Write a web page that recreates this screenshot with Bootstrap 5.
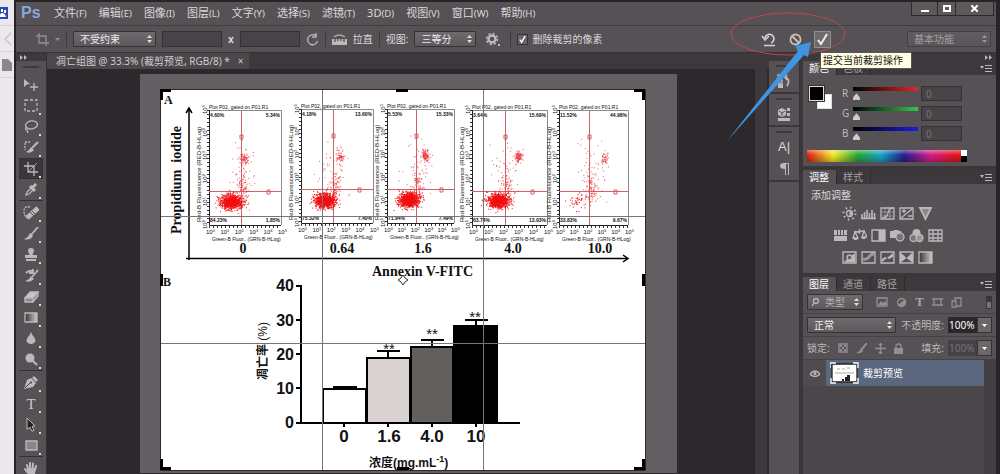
<!DOCTYPE html>
<html lang="zh-CN">
<head>
<meta charset="utf-8">
<meta name="viewport" content="width=device-width, initial-scale=1">
<title>凋亡组图 @ 33.3%</title>
<link href="https://cdn.jsdelivr.net/npm/bootstrap@5.3.0/dist/css/bootstrap.min.css" rel="stylesheet">
<style>
:root{--panel:#555155;--edge:#353135;--bar:#3c383c;--deep:#2c282c;--ink:#dcd8dc;--mute:#a5a1a5}
body{font:10px/14px "Noto Sans","Noto Sans CJK SC",sans-serif;color:var(--ink);background:#242024}
button,select,input{font:inherit;color:inherit}
button{background:none;border:0;padding:0;display:inline-flex;align-items:center;justify-content:center}
svg{display:block;flex:none;fill:none;stroke:#bcb8bc;stroke-width:1.3}
.solid{fill:#bcb8bc;stroke:none}
.browser{width:14px;background:#ebe8ec}
.browser div{height:26px;border-bottom:1px solid #d6d2d6;display:flex;align-items:center}
.app{border:2px solid #272327;border-width:2px 4px 0 2px;background:var(--panel)}
.menus{height:24px;padding-left:5px;border-bottom:1px solid #3f3b3f}
.menus .logo{font:bold 16px/22px "Liberation Sans",sans-serif;color:#86a9d8;width:33px}
.menus a{color:var(--ink);text-decoration:none;font-size:11px;margin-right:12px;white-space:nowrap}
.winbtns{border:1px solid #2c282c;border-top:0;height:14px;align-self:flex-start;margin-right:2px}
.winbtns button{width:18px;border-right:1px solid #2c282c;background:#5c585c}
.winbtns button:first-child{width:26px}.winbtns button:last-child{width:37px;border:0}
.winbtns svg{stroke:#fff;stroke-width:2}
.opts{height:28px;padding-left:20px;border-bottom:1px solid #353135;gap:6px;white-space:nowrap}
.vline{width:1px;height:16px;background:#3d393d;border:0}
.pick{height:16px;border:1px solid #353135;border-radius:1px;padding:0 12px 0 6px;line-height:14px;color:#f0edf0;appearance:none;
 background:url("data:image/svg+xml,%3Csvg xmlns='http://www.w3.org/2000/svg' width='5' height='8'%3E%3Cpath d='M0 3L2.500 0L5 3zM0 5L2.500 8L5 5z' fill='%23ddd'/%3E%3C/svg%3E") no-repeat right 3px center,linear-gradient(#6d696d,#5c585c)}
.pick.faint{opacity:.5}
.entry{height:16px;width:60px;border:1px solid #353135;background:#474347;padding:0 4px;min-width:0}
.tick{appearance:none;width:11px;height:11px;border:1px solid #353135;background:#67636a url("data:image/svg+xml,%3Csvg xmlns='http://www.w3.org/2000/svg' viewBox='0 0 10 10'%3E%3Cpath d='M2 5l2 3 4-7' fill='none' stroke='white' stroke-width='1.500'/%3E%3C/svg%3E")}
.commit{width:17px;height:17px;border:1px solid #918d91;background:#6e6a6e}
.marks{position:absolute;right:-19px;top:-18px;z-index:5;pointer-events:none}
.tipbox{position:absolute;right:-81px;top:26px;width:92px;height:17px;background:#ffffe1;border:1px solid #555;color:#111;font-size:10px;line-height:15px;padding-left:2px;z-index:6;white-space:nowrap}
.tools{width:31px;border-right:1px solid #353135}
.dockhead{height:8px;background:var(--bar);flex:none;display:flex;align-items:center}
.grip{height:13px;padding-top:5px;flex:none}.grip:before{content:"";display:block;width:16px;height:2px;background:#3d393d}
.tools .tool{width:24px;height:21px;position:relative;flex:none}
.tools .tool:after{content:"";position:absolute;right:2px;bottom:1px;width:2px;height:2px;background:#ddd}
.tools .tool:first-of-type:after{display:none}
.tools .on{background:#3a363a;box-shadow:0 0 0 1px #332f33 inset}
.tools hr{width:24px;height:1px;margin:0 0 1px;background:#332f33;border:0;opacity:1;flex:none}
.doc{background:var(--deep);position:relative}
.doctabs{height:16px;background:var(--bar)}
.doctabs .doctab{background:#4b474b;padding:0 5px 0 9px;color:#cfcbcf;white-space:nowrap}
.canvas{margin-top:5px}
.canvas svg{stroke:none}
.canvas text{fill:#111}
.vscroll{position:absolute;right:0;top:16px;bottom:0;width:14px;background:#3c383c;border-right:2px solid #2c282c}
.dock{width:227px}
.strip{width:31px;border-right:1px solid #353135}
.strip .group{border-bottom:2px solid #3a363a;display:flex;flex-direction:column;align-items:center}
.strip .grip{height:9px;padding-top:4px}
.strip .group button{height:22px}
.panels{background:#3a363a;padding-left:3px}
.pane{background:var(--panel);margin-bottom:4px}
.panetabs{height:14px;background:var(--bar);color:var(--mute)}
.panetabs button{padding:0 7px 0 6px;border-right:1px solid #2f2b2f}
.panetabs .now{background:var(--panel);color:#fff}
.colors{padding:11px 4px 0 6px}
.swatches{width:33px;height:24px;position:relative}
.swatches button{position:absolute;width:15px;height:15px;border:1px solid #ddd;background:#fff;left:8px;top:8px}
.swatches .fore{background:#000;left:0;top:0;box-shadow:0 0 0 1px #333;z-index:1}
.chan{height:20px;color:#bbb;gap:3px}
.chan label{width:8px}
.chan input[type=range]{appearance:none;width:65px;height:14px;background:linear-gradient(90deg,#000,var(--c)) 0 1px/100% 4px no-repeat;margin:0}
.chan input[type=range]::-webkit-slider-thumb{appearance:none;width:7px;height:7px;margin-top:7px;background:#ccc;clip-path:polygon(50% 0,100% 60%,100% 100%,0 100%,0 60%)}
.chan .entry{width:41px;height:15px;color:#777}
.red{--c:#e3262b}.green{--c:#35c650}.blue{--c:#1c1ce0}
.ramp{height:12px;width:160px;border-style:solid;border-image:linear-gradient(#fff 50%,#000 50%) 1;border-width:0 6px 0 0;
 background:linear-gradient(#fff6,#fff0 40%,#0004),linear-gradient(90deg,#e11b18,#f5ec2c 17%,#28a638 33%,#1aa5c8 48%,#241f8c 63%,#d81e8c 80%,#e3161b 97%)}
.adjtitle{height:18px;padding:4px 8px 0}
.adj{gap:4px;height:22px;padding-right:24px}
.adj button{width:15px;height:15px}
#adjust{padding-bottom:5px}
.lrow{height:23px;border-bottom:1px solid #454145;padding:0 4px}
.value{width:29px;height:16px;border:0;background:#2a262a;color:#fff;padding:0 1px;min-width:0}
.value:disabled{background:#454145;color:#77737a}
.caret{width:15px;height:16px;background:#6b676b;border:1px solid #353135}
.layers{background:#4a464a}
.layer{height:26px;background:#5a677c;color:#fff;margin-right:12px;font-size:10px}
.layer .see{width:23px;height:26px;background:#4f4b4f}
.thumbnail{width:29px;height:22px}
.rail{box-shadow:inset -12px 0 #423e42}
.dim{opacity:.6}
</style>
</head>
<body class="d-flex vh-100 overflow-hidden">
<aside class="browser flex-shrink-0">
 <div><svg width="9" height="14" viewBox="0 0 9 14"><path fill="#2747b5" stroke="none" d="M0 1h8v12H0z"/><path fill="#fff" stroke="none" d="M0 10q0-3 2-3 3 0 4 4H0zM1 3h2v3H1zM4 4h2v3H4z"/></svg></div>
 <div><svg width="12" height="14" viewBox="0 0 12 14"><path stroke="#c3bfc3" d="M11 1L5 7l6 6"/></svg></div>
 <div><svg width="12" height="12" viewBox="0 0 12 12"><path fill="#8a868a" stroke="none" d="M2 0h6l4 4v8H2z"/></svg></div>
</aside>
<div class="app flex-grow-1 d-flex flex-column overflow-hidden">
 <nav class="menus d-flex align-items-center">
  <span class="logo">Ps</span>
  <a href="#">文件<small>(F)</small></a><a href="#">编辑<small>(E)</small></a><a href="#">图像<small>(I)</small></a><a href="#">图层<small>(L)</small></a><a href="#">文字<small>(Y)</small></a><a href="#">选择<small>(S)</small></a><a href="#">滤镜<small>(T)</small></a><a href="#">3D<small>(D)</small></a><a href="#">视图<small>(V)</small></a><a href="#">窗口<small>(W)</small></a><a href="#">帮助<small>(H)</small></a>
  <div class="winbtns d-flex ms-auto"><button aria-label="最小化"><svg width="8" height="8"><path d="M0 6h8"/></svg></button><button aria-label="最大化"><svg width="8" height="7"><path d="M1 1h6v5H1z"/></svg></button><button aria-label="关闭"><svg width="7" height="7"><path d="M0 0l7 7M7 0L0 7"/></svg></button></div>
 </nav>
 <div class="opts d-flex align-items-center">
  <button class="dim" aria-label="裁剪工具"><svg width="13" height="13" viewBox="0 0 13 13"><path d="M3 0v10h10M0 3h10v10"/></svg></button>
  <svg class="dim" width="5" height="3"><path class="solid" d="M0 0h5L2.500 3z"/></svg><i class="vline"></i>
  <select class="pick" style="width:83px" aria-label="长宽比"><option>不受约束</option></select>
  <input class="entry" aria-label="宽度"><span class="fw-bold">x</span><input class="entry" aria-label="高度">
  <button aria-label="旋转"><svg width="13" height="13" viewBox="0 0 13 13"><path d="M10 3a5 5 0 1 0 1.500 5M10 0v4H6"/></svg></button>
  <i class="vline"></i>
  <svg width="15" height="12" viewBox="0 0 15 12"><path class="solid" d="M0 6h15v6H0z"/><path d="M2 4q5-4 11 0" stroke="#aaa"/><path stroke="#555155" d="M3 6v3M6 6v2M9 6v2M12 6v3"/></svg>
  <button>拉直</button><i class="vline"></i>
  <label for="overlay">视图:</label><select id="overlay" class="pick" style="width:62px"><option>三等分</option></select>
  <button class="mx-1" aria-label="设置"><svg width="14" height="14" viewBox="0 0 14 14"><circle cx="6" cy="7" r="3.500" stroke-width="2.500"/><circle cx="6" cy="7" r="5.500" stroke-dasharray="2.200 2.100" stroke-width="1.500"/><path class="solid" d="M12 12h2v2h-2z"/></svg></button>
  <i class="vline"></i>
  <label class="d-flex align-items-center gap-1"><input class="tick" type="checkbox" checked>删除裁剪的像素</label>
  <div class="ms-auto d-flex align-items-center position-relative align-self-stretch">
   <button class="me-2" aria-label="复位裁剪"><svg width="16" height="16" viewBox="0 0 16 16" style="stroke:#d6d2d6;stroke-width:1.600"><path d="M4 7a4.500 4.500 0 1 1 6 5M1 5l3 4 4-4M3 14.500h11"/></svg></button>
   <button class="mx-1" aria-label="取消"><svg width="13" height="13" viewBox="0 0 13 13" style="stroke:#c6c2b6;stroke-width:1.800"><circle cx="6.500" cy="6.500" r="5"/><path d="M3 3l7 7"/></svg></button>
   <button class="commit ms-2" aria-label="提交"><svg width="13" height="13" viewBox="0 0 13 13" style="stroke:#eee;stroke-width:2"><path d="M2 7l3 4 6-10"/></svg></button>
   <svg class="marks" width="130" height="135" viewBox="720 8 130 135"><ellipse cx="788" cy="34" rx="57" ry="21" stroke="#b94a4e" stroke-width="1"/><path fill="#3f95e2" stroke="none" d="M727 141L798 51L795 46L811 42L808 57L804 55Z"/></svg>
   <div class="tipbox" role="tooltip">提交当前裁剪操作</div>
  </div>
  <select class="pick faint" style="width:84px;margin:0 5px 0 70px" aria-label="工作区"><option>基本功能</option></select>
 </div>
 <main class="d-flex flex-grow-1 overflow-hidden">
  <div class="tools flex-shrink-0 d-flex flex-column align-items-center">
   <div class="dockhead w-100 ps-1"><svg width="7" height="5" stroke-width="1"><path d="M0 0l3 2.500L0 5zM4 0l3 2.500L4 5z" class="solid"/></svg></div><div class="grip"></div>
   <button class="tool" aria-label="移动"><svg width="16" height="14" viewBox="0 0 16 14"><path class="solid" d="M1 1l6 5-3 .5L1 9z"/><path d="M11 5v8M7 9h8"/></svg></button>
   <button class="tool" aria-label="选框"><svg width="14" height="13" viewBox="0 0 14 13"><path d="M1 1h12v11H1z" stroke-dasharray="3 2"/></svg></button>
   <button class="tool" aria-label="套索"><svg width="14" height="13" viewBox="0 0 14 13"><ellipse cx="7.500" cy="5" rx="6" ry="4" transform="rotate(-10 7 5)"/><path d="M3 7q-3 2 0 3l1 3"/></svg></button>
   <button class="tool" aria-label="快速选择"><svg width="16" height="13" viewBox="0 0 16 13"><path d="M7 1H2v8" stroke-dasharray="2 1"/><path stroke-width="2" d="M15 1L9 7"/><path class="solid" d="M8 6l3 3q-3 4-8 2 3-1 5-5z"/></svg></button>
   <button class="tool on" aria-label="裁剪"><svg width="14" height="14" viewBox="0 0 14 14" stroke-width="1.600"><path d="M4 0v10h10M0 4h10v10"/><path stroke-width=".8" d="M5 9l8-8"/></svg></button>
   <button class="tool" aria-label="吸管"><svg width="14" height="14" viewBox="0 0 14 14"><path d="M2 12l1-3 5-5 2 2-5 5z"/><path stroke-width="3" d="M8 5l4-4M6 3l5 5"/></svg></button>
   <hr>
   <button class="tool" aria-label="修复画笔"><svg width="16" height="14" viewBox="0 0 16 14"><path d="M7 1Q1 0 1 5t3 7" stroke-dasharray="2 1"/><path stroke-width="5" d="M4 12L15 2"/><path stroke="#555155" stroke-width="1" d="M7 6l4 4M9 5l4 4"/></svg></button>
   <button class="tool" aria-label="画笔"><svg width="15" height="13" viewBox="0 0 15 13"><path stroke-width="1.800" d="M14 0L7 8"/><path class="solid" d="M6 6l3 3q-3 5-9 3 4-1 6-6z"/></svg></button>
   <button class="tool" aria-label="图章"><svg width="14" height="14" viewBox="0 0 14 14"><path class="solid" d="M7 0q3 0 3 3L8.500 7H13v3H1V7h4.500L4 3q0-3 3-3zM2 11h10v2H2z"/></svg></button>
   <button class="tool" aria-label="历史画笔"><svg width="15" height="14" viewBox="0 0 15 14"><path stroke-width="1.800" d="M14 1L8 8M2 4q4-4 7-1M9 0v4H5"/><path class="solid" d="M7 7l3 3q-4 4-9 2 4-1 6-5z"/></svg></button>
   <button class="tool" aria-label="橡皮擦"><svg width="15" height="12" viewBox="0 0 15 12"><path fill="#c8c4c8" d="M1 7l5-6h8L9 7z"/><path fill="#8b878b" d="M1 7h8v4H1zM9 7l5-6v4l-5 6z"/></svg></button>
   <button class="tool" aria-label="渐变"><svg width="14" height="11" viewBox="0 0 14 11"><defs><linearGradient id="gr"><stop stop-color="#333"/><stop offset="1" stop-color="#ccc"/></linearGradient></defs><path fill="url(#gr)" d="M1 1h12v9H1z"/></svg></button>
   <button class="tool" aria-label="模糊"><svg width="10" height="13" viewBox="0 0 10 13"><path class="solid" d="M5 0q1 3 3 5 3 4 0 6-3 2-6 0-3-2 0-6 2-2 3-5z"/></svg></button>
   <button class="tool" aria-label="减淡"><svg width="13" height="13" viewBox="0 0 13 13"><circle class="solid" cx="5" cy="5" r="4.500"/><path stroke-width="2" d="M7 7l5 5"/></svg></button>
   <hr>
   <button class="tool" aria-label="钢笔"><svg width="14" height="14" viewBox="0 0 14 14"><path class="solid" d="M0 13l3-9 4-2 5 5-3 4zM8 2l2-2 4 4-2 2z"/><path stroke="#444" stroke-width="1" d="M1 12l5-5"/><circle cx="7" cy="6.500" r="1" fill="#444" stroke="none"/></svg></button>
   <button class="tool" aria-label="文字"><span style="font:15px/16px 'Liberation Serif',serif;color:#ccc">T</span></button>
   <button class="tool" aria-label="路径选择"><svg width="10" height="15" viewBox="0 0 10 15"><path fill="#222" stroke-width="1" d="M1 1l8 8-3 .3 2 4-2 1-2-4-3 2z"/></svg></button>
   <button class="tool" aria-label="矩形"><svg width="13" height="11" viewBox="0 0 13 11"><path fill="#8a868a" d="M1 1h11v9H1z"/></svg></button>
   <hr>
   <button class="tool" aria-label="抓手"><svg width="14" height="14" viewBox="0 0 14 14"><path stroke-linecap="round" stroke-width="2" d="M4 7L3 3M6 7V1M8.500 7L9 1.500M11 8l1-4M3 10L1 7"/><path class="solid" d="M3 6h9l-1 6-2 2H5l-3-5z"/></svg></button>
  </div>
  <section class="doc flex-grow-1 overflow-hidden">
   <div class="doctabs d-flex"><div class="doctab d-flex align-items-center gap-2">凋亡组图 @ 33.3% (裁剪预览, RGB/8) * <button aria-label="关闭文档">×</button></div></div>
   <div class="canvas d-flex justify-content-center">
    <svg width="537" height="399" viewBox="140 75 537 399" font-family="'Liberation Sans','Noto Sans CJK SC',sans-serif">
     <path fill="#625e62" d="M140 75h537v399H140z"/><path fill="#fff" stroke="#2c282c" stroke-width="1" d="M160.500 90.500h485v381h-485z"/>
     <g font-family="'Liberation Serif',serif" font-weight="bold" font-size="14">
      <text x="164" y="105" font-size="12">A</text><text x="163" y="287" font-size="12">B</text>
      <text transform="translate(181 235) rotate(-90)" xml:space="preserve">Propidium  iodide</text>
      <text x="372" y="277">Annexin V-FITC</text>
      <g text-anchor="middle"><text x="243" y="254">0</text><text x="342" y="254">0.64</text><text x="423" y="254">1.6</text><text x="513" y="254">4.0</text><text x="600" y="254">10.0</text></g>
     </g>
     <path stroke="#000" stroke-width="1.500" d="M189 110v151M186 259.500h441M186 114l3-5 3 5M623 256l5 3.500-5 3.500"/>
     <g id="plots"></g>
     <g stroke="#000" stroke-width="2">
      <path d="M301 286v138h219M296 287h5M296 321h5M296 355h5M296 389h5M296 424h5M344 424v4M388 424v4M432 424v4M476 424v4M333 388h24M377 352h23M388 352v7M421 341h23M432 341v6M465 321h23M476 321v6"/>
      <path fill="#fff" d="M323 390h43v34h-43z"/><path fill="#d8d3d0" d="M367 359h43v65h-43z"/><path fill="#635f5c" d="M411 348h42v76h-42z"/><path fill="#000" d="M454 327h43v97h-43z"/>
     </g>
     <g font-weight="bold" font-size="16" text-anchor="end"><text x="294" y="292">40</text><text x="294" y="327">30</text><text x="294" y="361">20</text><text x="294" y="395">10</text><text x="294" y="429">0</text></g>
     <g font-weight="bold" font-size="17" text-anchor="middle"><text x="344" y="443">0</text><text x="389" y="443">1.6</text><text x="432" y="443">4.0</text><text x="476" y="443">10</text></g>
     <g font-size="15" text-anchor="middle"><text x="389" y="355">**</text><text x="432" y="340">**</text><text x="475" y="323">**</text></g>
     <text transform="translate(267 381) rotate(-90)" font-size="12" font-weight="bold">凋亡率 <tspan font-weight="normal">(%)</tspan></text>
     <text x="369" y="468" font-size="12" font-weight="bold">浓度(mg.mL<tspan font-size="9" dy="-5">-1</tspan><tspan dy="5">)</tspan></text>
     <path stroke="#777377" stroke-width="1" d="M322.500 91v380M483.500 91v380M161 217.500h484M161 344.500h484"/>
     <path fill="#000" d="M160 90h11v3h-8v8h-3zM645 90h-11v3h8v8h3zM160 471h11v-3h-8v-8h-3zM645 471h-11v-3h8v-8h3zM396 90h12v3h-12zM397 468h12v3h-12zM160 275h3v12h-3zM642 275h3v12h-3z"/>
     <path fill="#fff" stroke="#333" stroke-width="1" d="M403 276l2 3 3 2-3 2-2 3-2-3-3-2 3-2z"/>
    </svg>
   </div>
   <div class="vscroll"></div>
  </section>
  <div class="dock flex-shrink-0 d-flex flex-column">
   <div class="dockhead justify-content-end pe-1"><svg width="7" height="5"><path d="M0 0l3 2.500L0 5zM4 0l3 2.500L4 5z" class="solid"/></svg></div>
   <div class="d-flex flex-grow-1">
    <div class="strip flex-shrink-0">
     <div class="group"><div class="grip"></div><button aria-label="历史记录"><svg width="14" height="14" viewBox="0 0 14 14"><path d="M1 1h4v3H1zM1 6h4v3H1z"/><path class="solid" d="M1 10h5v4H1z"/><path stroke-width="1.800" d="M8 3q6 2 2 9M10 1L8 3l2 3"/></svg></button></div>
     <div class="group"><div class="grip"></div><button aria-label="属性"><svg width="14" height="14" viewBox="0 0 14 14"><path class="solid" d="M1 3l4-2 4 2v5l-4 2-4-2zM10 1h3v3h-3zM10 6h3v3h-3zM1 11h12v3H1z"/><path stroke="#555" stroke-width="1" d="M2 4l3 2 3-2M5 6v3"/></svg></button></div>
     <div class="group"><div class="grip"></div><button aria-label="字符"><span style="font:13px/18px 'Liberation Sans',sans-serif">A|</span></button><button aria-label="段落"><svg width="9" height="12" viewBox="0 0 9 12"><path class="solid" d="M9 0v12H8V1H6v11H5V6Q0 6 0 3t4-3z"/></svg></button></div>
    </div>
    <div class="panels flex-grow-1 d-flex flex-column">
     <section class="pane pb-1">
      <div class="panetabs d-flex"><button class="now">颜色</button><button>色板</button><svg class="ms-auto me-1 mt-1" width="12" height="7"><path class="solid" d="M0 1h4L2 4z"/><path stroke-width="1" d="M5 .5h7M5 3.500h7M5 6.500h7"/></svg></div>
      <div class="colors d-flex">
       <div class="swatches"><button class="fore" aria-label="前景色"></button><button aria-label="背景色"></button></div>
       <div>
        <div class="chan d-flex red"><label for="r">R</label><input id="r" type="range" max="255" value="0"><input class="entry" value="0" aria-label="R 值"></div>
        <div class="chan d-flex green"><label for="g">G</label><input id="g" type="range" max="255" value="0"><input class="entry" value="0" aria-label="G 值"></div>
        <div class="chan d-flex blue"><label for="b">B</label><input id="b" type="range" max="255" value="0"><input class="entry" value="0" aria-label="B 值"></div>
       </div>
      </div>
      <div class="ramp ms-1 mt-1"></div>
     </section>
     <section class="pane">
      <div class="panetabs d-flex"><button class="now">调整</button><button>样式</button><svg class="ms-auto me-1 mt-1" width="12" height="7"><path class="solid" d="M0 1h4L2 4z"/><path stroke-width="1" d="M5 .5h7M5 3.500h7M5 6.500h7"/></svg></div>
      <div class="adjtitle">添加调整</div>
      <div id="adjust"></div>
     </section>
     <section class="layers flex-grow-1 rail">
      <div class="panetabs d-flex"><button class="now">图层</button><button>通道</button><button>路径</button><svg class="ms-auto me-1 mt-1" width="12" height="7"><path class="solid" d="M0 1h4L2 4z"/><path stroke-width="1" d="M5 .5h7M5 3.500h7M5 6.500h7"/></svg></div>
      <div style="background:var(--panel)">
       <div class="lrow d-flex align-items-center">
        <div class="position-relative"><select class="pick" style="width:56px;padding-left:17px;color:#b5b1b5" aria-label="滤镜类型"><option>类型</option></select><svg class="position-absolute top-0 start-0 m-1" width="9" height="8" viewBox="0 0 9 8"><circle cx="5" cy="3" r="2.500"/><path d="M3 5L1 8"/></svg></div>
        <div class="d-flex align-items-center gap-2 ms-auto me-4 dim">
         <svg width="12" height="10"><path d="M1 1h10v8H1z"/><path class="solid" d="M2 8l3-4 2 2 2-2 2 4z"/></svg><svg width="11" height="11"><circle cx="5.500" cy="5.500" r="4"/><path class="solid" d="M2 8a4 4 0 0 0 7-6z"/></svg><b style="font:bold 13px/14px 'Liberation Serif',serif">T</b><svg width="11" height="10"><path d="M2 2h7v6H2zM0 2h4M7 2h4M0 8h4M7 8h4"/></svg><svg width="11" height="11"><path d="M1 4h4v6H1zM4 3V1h6v8H6"/></svg>
        </div><svg width="6" height="13"><path fill="#3a363a" stroke="none" d="M0 0h6v13H0z"/><path fill="#777377" stroke="none" d="M1 6h4v6H1z"/></svg>
       </div>
       <div class="lrow d-flex align-items-center"><select class="pick" style="width:89px" aria-label="混合模式"><option>正常</option></select><label class="ms-auto me-1" for="op" style="color:#bbb">不透明度:</label><input id="op" class="value" value="100%"><button class="caret" aria-label="不透明度滑块"><svg width="5" height="3"><path fill="#fff" stroke="none" d="M0 0h5L2.500 3z"/></svg></button></div>
       <div class="lrow d-flex align-items-center"><span style="color:#bbb">锁定:</span>
        <div class="d-flex gap-2 ms-2 dim align-items-center"><svg width="10" height="10"><path d="M1 1h8v8H1z"/><path class="solid" d="M2 2h2v2H2zM6 2h2v2H6zM4 4h2v2H4zM2 6h2v2H2zM6 6h2v2H6z"/></svg><svg width="11" height="11"><path d="M11 0L5 7" stroke-width="2"/><path class="solid" d="M5 5l2 3q-2 3-7 2 4-1 5-5z"/></svg><svg width="11" height="11"><path d="M5.500 0v11M0 5.500h11M4 2l1.500-1.500L7 2M4 9l1.500 1.500L7 9"/></svg><svg width="9" height="11"><path d="M2 5V3q0-2 2.500-2T7 3v2"/><path class="solid" d="M0 5h9v6H0z"/></svg></div>
        <label class="ms-auto me-1" for="fi" style="color:#bbb">填充:</label><input id="fi" class="value" value="100%" disabled><button class="caret" aria-label="填充滑块"><svg width="5" height="3"><path fill="#fff" stroke="none" d="M0 0h5L2.500 3z"/></svg></button></div>
      </div>
      <div class="layer d-flex align-items-center gap-1"><button class="see" aria-label="可见性"><svg width="10" height="7" viewBox="0 0 10 7"><path d="M0 4q5-6 10 0-5 5-10 0z"/><circle class="solid" cx="5" cy="3.500" r="1.500"/></svg></button>
       <svg class="thumbnail" viewBox="0 0 29 22"><path fill="#fff" stroke="#222" d="M2 2h25v18H2z"/><path stroke="#fff" d="M0 6V1h6M23 1h5v5M28 16v5h-5M6 21H1v-5"/><path stroke="#aaa" stroke-width="1" d="M5 11h19M7 7h3M12 7h3M17 6h3"/><path fill="#222" stroke="none" d="M12 17h2v2h-2zM15 15h2v4h-2zM17 13h3v6h-3z"/></svg><span>裁剪预览</span></div>
     </section>
    </div>
   </div>
  </div>
 </main>
</div>
<script src="https://cdn.jsdelivr.net/npm/bootstrap@5.3.0/dist/js/bootstrap.bundle.min.js"></script>
<script>
// Adjustment icons, three rows of buttons on a 15x15 grid
const frame = '<path d="M1 2h13v11H1z"/>';
const rows = [
 [['亮度','<circle cx="7.500" cy="7.500" r="3"/><path class="solid" d="M7.500 5a2.500 2.500 0 0 1 0 5z"/><circle cx="7.500" cy="7.500" r="6" stroke-width="2" stroke-dasharray="1.500 3.210"/>'],
  ['色阶','<path stroke-width="1.600" d="M0 12.500h15M1 12V8M3.500 12V6M6 12V4M8.500 12V7M11 12V4M13.500 12V7"/>'],
  ['曲线', frame+'<path stroke-width=".6" d="M5 2v11M10 2v11M1 6h13M1 10h13"/><path d="M2 12q5 0 6-5t5-5"/>'],
  ['曝光度', frame+'<path d="M2 12L13 3M3 5h4M5 3v4M9 10h4"/>'],
  ['自然饱和度','<path fill="#888" stroke-width="1.800" d="M2 2h11L7.500 13z"/>']],
 [['色相','<path class="solid" d="M1 2h3v5H1zM5 2h2v5H5zM8 2h2v5H8zM11 2h3v5h-3zM1 8h13v5H1z"/>'],
  ['色彩平衡','<path d="M7.500 1v5M2 4l11-1M3 4l-2 6h5zM12 3l-2 6h5z"/><path class="solid" d="M1 10h5l-1 2H2zM9 9h5l-1 2h-3z"/>'],
  ['黑白', frame+'<path class="solid" d="M7.500 2H14v11H7.500z"/>'],
  ['照片滤镜','<path class="solid" d="M0 3h3l1-1h4l1 1h2v7H0z"/><circle cx="10" cy="9" r="4" fill="#77737a"/>'],
  ['通道混合器','<circle class="solid" cx="7.500" cy="5" r="4"/><circle cx="4.500" cy="10" r="3.500" fill="#777"/><circle cx="10.500" cy="10" r="3.500" fill="#999"/>'],
  ['颜色查找', frame+'<path d="M5 2v11M10 2v11M1 6h13M1 10h13"/>']],
 [['反相', frame+'<path class="solid" d="M2 12L13 3v9z"/><circle cx="7.500" cy="7.500" r="2.500" fill="#666"/>'],
  ['色调分离', frame+'<path stroke-width="3" d="M2 9q4 1 6-2t5-3" opacity=".7"/>'],
  ['阈值', frame+'<path class="solid" d="M2 12V9l3-2 2 1 6-5v4l-4 2-2-1z"/>'],
  ['可选颜色', frame+'<path class="solid" d="M1 2l6.500 6L14 2v11L7.500 8 1 13z"/>'],
  ['渐变映射','<path fill="url(#gr)" d="M1 2h13v11H1z"/>']]];
document.getElementById('adjust').innerHTML = rows.map(r => '<div class="adj d-flex justify-content-center align-items-center">' +
 r.map(([n, s]) => `<button aria-label="${n}"><svg width="15" height="15">${s}</svg></button>`).join('') + '</div>').join('');

// Flow cytometry plots: axes, quadrant lines and event clouds
let seed = 7;
const rnd = () => (seed = (seed * 16807) % 2147483647) / 2147483647;
const gauss = () => rnd() + rnd() + rnd() + rnd() - 2;
const cloud = (n, cx, cy, sx, sy) => { let d = ''; while (n-- > 0) d += `M${(cx + gauss() * sx * 1.7).toFixed(1)} ${(cy + gauss() * sy * 1.7).toFixed(1)}h1`; return d; };
const plots = [
 {x:209,r:281,t:111,b:226,v:241,h:192,c:268,m:[520,231,203],u:[70,244,160],p:['4.60%','5.34%','84.23%','1.85%']},
 {x:301,r:373,t:110,b:224,v:333,h:190,c:359,m:[520,325,202],u:[60,340,158],p:['4.18%','13.60%','75.32%','7.40%']},
 {x:387,r:454,t:110,b:224,v:416,h:190,c:441,m:[520,409,201],u:[110,425,157],p:['5.53%','15.33%','71.94%','7.49%']},
 {x:472,r:547,t:111,b:226,v:505,h:192,c:532,m:[460,498,202],u:[100,518,158],p:['3.64%','15.69%','63.74%','13.93%']},
 {x:559,r:628,t:111,b:226,v:589,h:192,c:615,m:[50,580,203],u:[45,604,160],p:['11.52%','44.98%','33.83%','9.67%']}];
document.getElementById('plots').innerHTML = plots.map(p => {
 const w = (p.r - p.x) / 5, g = (p.b - p.t) / 5;
 let s = `<path stroke="#8a8a8a" stroke-width="1" d="M${p.x} ${p.t}.5H${p.r}.5V${p.b}"/><path stroke="#222" stroke-width="1" d="M${p.x}.5 ${p.t}V${p.b}.5H${p.r}"/>`;
 s += `<path stroke="#333" stroke-width="2" stroke-dasharray="1 3" d="M${p.x - 1} ${p.t}V${p.b}M${p.x} ${p.b + 2}H${p.r}"/>`;
 s += `<path stroke="#d0606a" stroke-width="1" d="M${p.v}.5 ${p.t}V${p.b}M${p.x} ${p.h}.5H${p.r}M${p.v - 1} ${p.t + 25}h3v4h-3zM${p.c - 1} ${p.h - 1}h3v4h-3z"/>`;
 s += `<path stroke="#f01010" stroke-width="1" d="${cloud(p.m[0], p.m[1], p.m[2], 6, 4)}${cloud(p.m[0] > 100 ? 420 : 0, p.m[1], p.m[2], 4, 3)}"/>`;
 s += `<path stroke="#e83a40" stroke-width=".8" d="${cloud(p.u[0], p.u[1], p.u[2], 2, 3)}${cloud(70, p.v + 2, p.h - 3, 3, 7)}${cloud(55, p.v + 1, p.h - 20, 8, 16)}"/>`;
 s += `<g font-size="5"><text x="${p.x}" y="${p.t - 1}">Plot P02, gated on P01.R1</text><text x="${p.x + 3}" y="${p.b + 16}">Green-B Fluor.. (GRN-B-HLog)</text>`;
 s += `<g font-weight="bold"><text x="${p.x + 1}" y="${p.t + 7}">${p.p[0]}</text><text x="${p.r - 1}" y="${p.t + 7}" text-anchor="end">${p.p[1]}</text><text x="${p.x + 1}" y="${p.b - 3}">${p.p[2]}</text><text x="${p.r - 1}" y="${p.b - 3}" text-anchor="end">${p.p[3]}</text></g>`;
 for (let i = 0; i < 6; i++) s += `<text x="${p.x + w * i - 3}" y="${p.b + 9}" font-size="6">10<tspan font-size="4" dy="-2">${i}</tspan></text><text font-size="6" transform="translate(${p.x - 2} ${p.b - g * i + 4}) rotate(-90)">10<tspan font-size="4" dy="-2">${i}</tspan></text>`;
 return s + `<text font-size="6" transform="translate(${p.x - 8} ${p.b - 3}) rotate(-90)">Red-B Fluorescence (RED-B-HLog)</text></g>`;
}).join('');
</script>
</body>
</html>
